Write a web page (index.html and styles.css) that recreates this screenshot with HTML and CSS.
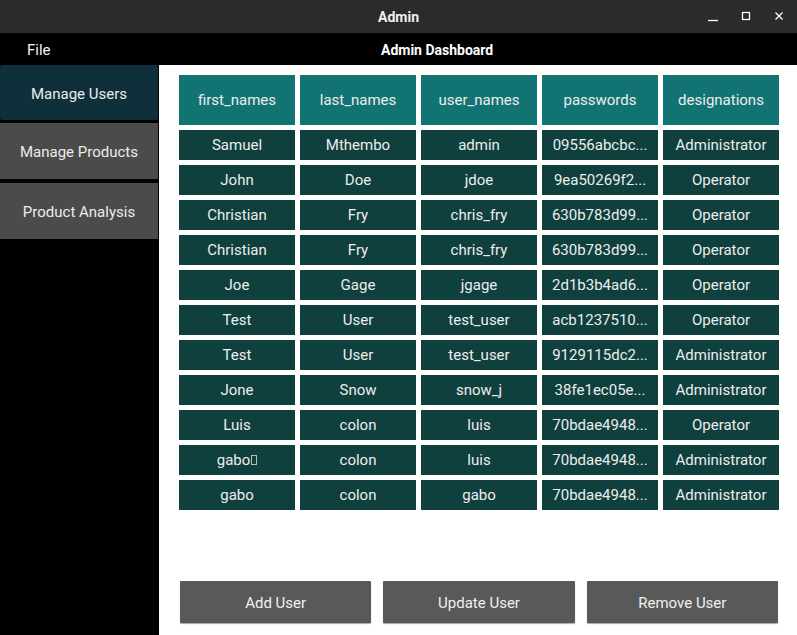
FILE: index.html
```html
<!DOCTYPE html>
<html>
<head>
<meta charset="utf-8">
<link rel="stylesheet" href="styles.css">
</head>
<body>
<div class="window">
  <div class="titlebar">
    <span class="title">Admin</span>
    <div class="controls">
      <svg class="ctl" width="12" height="12" viewBox="0 0 12 12"><line x1="1" y1="10.5" x2="11" y2="10.5" stroke="#fff" stroke-width="1.3"/></svg>
      <svg class="ctl" width="12" height="12" viewBox="0 0 12 12"><rect x="2.5" y="2.5" width="7" height="7" fill="none" stroke="#fff" stroke-width="1.3"/></svg>
      <svg class="ctl" width="12" height="12" viewBox="0 0 12 12"><path d="M2.5 2.5 L9.5 9.5 M9.5 2.5 L2.5 9.5" stroke="#fff" stroke-width="1.3"/></svg>
    </div>
  </div>
  <div class="menubar">
    <span class="file">File</span>
    <span class="heading">Admin Dashboard</span>
  </div>
  <div class="main">
    <nav class="sidebar">
      <div class="navbtn active">Manage Users</div>
      <div class="navbtn">Manage Products</div>
      <div class="navbtn">Product Analysis</div>
    </nav>
    <section class="content">
      <div class="table">
        <div class="th">first_names</div><div class="th">last_names</div><div class="th">user_names</div><div class="th">passwords</div><div class="th">designations</div>
        <div class="td">Samuel</div><div class="td">Mthembo</div><div class="td">admin</div><div class="td">09556abcbc...</div><div class="td">Administrator</div>
        <div class="td">John</div><div class="td">Doe</div><div class="td">jdoe</div><div class="td">9ea50269f2...</div><div class="td">Operator</div>
        <div class="td">Christian</div><div class="td">Fry</div><div class="td">chris_fry</div><div class="td">630b783d99...</div><div class="td">Operator</div>
        <div class="td">Christian</div><div class="td">Fry</div><div class="td">chris_fry</div><div class="td">630b783d99...</div><div class="td">Operator</div>
        <div class="td">Joe</div><div class="td">Gage</div><div class="td">jgage</div><div class="td">2d1b3b4ad6...</div><div class="td">Operator</div>
        <div class="td">Test</div><div class="td">User</div><div class="td">test_user</div><div class="td">acb1237510...</div><div class="td">Operator</div>
        <div class="td">Test</div><div class="td">User</div><div class="td">test_user</div><div class="td">9129115dc2...</div><div class="td">Administrator</div>
        <div class="td">Jone</div><div class="td">Snow</div><div class="td">snow_j</div><div class="td">38fe1ec05e...</div><div class="td">Administrator</div>
        <div class="td">Luis</div><div class="td">colon</div><div class="td">luis</div><div class="td">70bdae4948...</div><div class="td">Operator</div>
        <div class="td">gabo<span class="tofu"></span></div><div class="td">colon</div><div class="td">luis</div><div class="td">70bdae4948...</div><div class="td">Administrator</div>
        <div class="td">gabo</div><div class="td">colon</div><div class="td">gabo</div><div class="td">70bdae4948...</div><div class="td">Administrator</div>
      </div>
      <div class="actions">
        <button class="act">Add User</button>
        <button class="act">Update User</button>
        <button class="act">Remove User</button>
      </div>
    </section>
  </div>
</div>
</body>
</html>
```

FILE: styles.css
```css
* { box-sizing: border-box; }
html, body { margin: 0; padding: 0; }
body {
  width: 797px;
  height: 635px;
  overflow: hidden;
  font-family: Roboto, "Liberation Sans", sans-serif;
  background: #000;
  color: #fff;
}
.window { display: flex; flex-direction: column; height: 635px; }
.titlebar {
  height: 33px;
  background: #2b2b2b;
  display: flex;
  align-items: center;
  justify-content: center;
  position: relative;
}
.title { font-weight: 700; font-size: 14px; color: #f0f0f0; padding-top: 1px; }
.controls {
  position: absolute;
  right: 12px;
  top: 10px;
  display: flex;
  gap: 21px;
}
.ctl { display: block; }
.menubar {
  height: 32px;
  background: #000;
  display: flex;
  align-items: center;
  font-size: 14px;
  padding-top: 1px;
}
.file { padding-left: 27px; width: 80px; color: #f2f2f2; font-size: 15px; }
.heading { margin-left: 301px; font-weight: 700; font-size: 14px; color: #fff; }
.main { flex: 1; display: flex; }
.sidebar {
  width: 159px;
  background: #000;
  display: flex;
  flex-direction: column;
  gap: 4px;
  padding-right: 1px;
}
.navbtn {
  height: 56px;
  background: #4b4b4b;
  display: flex;
  align-items: center;
  justify-content: center;
  font-size: 15px;
  color: #ececec;
  padding-top: 2px;
}
.navbtn.active {
  height: 55px;
  background: #0f2f3b;
  border-radius: 2px;
  margin-bottom: -1px;
}
.content {
  flex: 1;
  background: #fff;
  display: flex;
  flex-direction: column;
  padding: 10px 18px 12px 20px;
}
.table {
  display: grid;
  grid-template-columns: repeat(5, 116px);
  grid-template-rows: 50px;
  grid-auto-rows: 30px;
  gap: 5px;
}
.th, .td {
  display: flex;
  align-items: center;
  justify-content: center;
  font-size: 15px;
  color: #ededed;
}
.th { background: #127373; }
.td { background: #0f403e; }
.tofu {
  display: inline-block;
  width: 6px;
  height: 10px;
  border: 1px solid #bbb;
  margin-left: 1px;
}
.actions {
  margin-top: auto;
  display: flex;
  gap: 12px;
  padding-left: 1px;
  padding-right: 1px;
}
.act {
  flex: 1;
  height: 42px;
  border: none;
  background: #595959;
  color: #f0f0f0;
  font-family: Roboto, "Liberation Sans", sans-serif;
  font-size: 15px;
  box-shadow: 0 1px 1px rgba(0,0,0,0.35);
  border-radius: 1px;
  padding-top: 2px;
}
```
